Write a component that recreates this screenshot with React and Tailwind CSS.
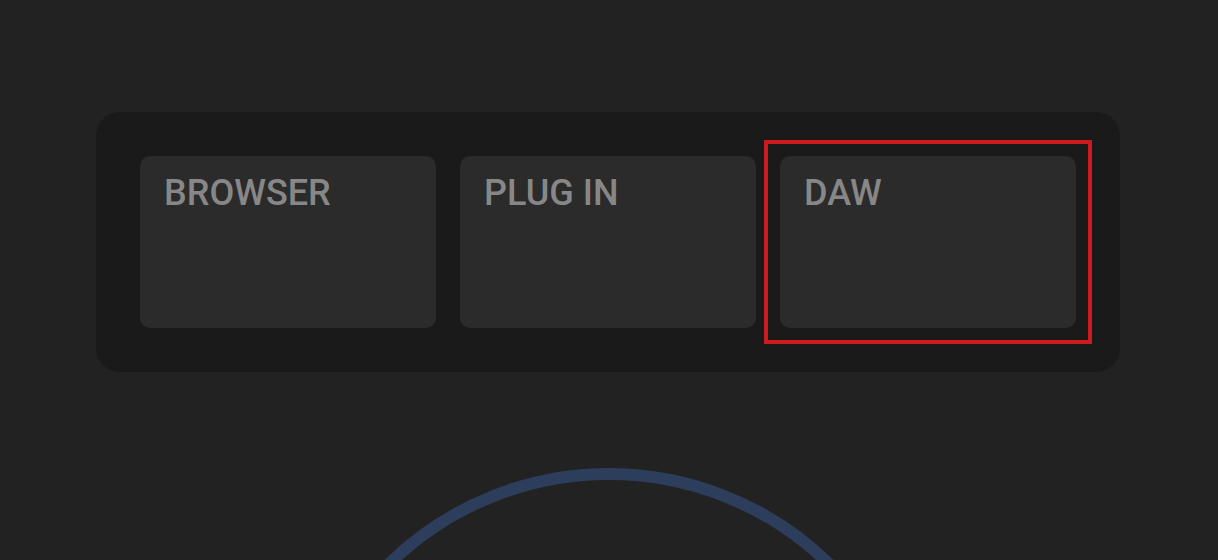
export default function App() {
  const cards = ["BROWSER", "PLUG IN", "DAW"];
  return (
    <div
      className="w-[1218px] h-[560px] overflow-hidden bg-[#222222] flex flex-col pt-[112px]"
      style={{ fontFamily: "Roboto, 'Noto Sans', sans-serif" }}
    >
      <div className="ml-[96px] w-[1024px] h-[260px] rounded-[24px] bg-[#1a1a1a] p-[44px] flex gap-[24px] shrink-0">
        {cards.map((c, i) => (
          <div key={c} className="relative w-[296px] h-[172px]">
            {i === 2 && (
              <div className="absolute -inset-[16px] border-[4px] border-[#cc1a1d] pointer-events-none" />
            )}
            <div className="w-full h-full rounded-[10px] bg-[#2b2b2b] pl-[24px] pt-[16px]">
              <div className="text-[36px] leading-[42px] font-medium text-[#878787]">{c}</div>
            </div>
          </div>
        ))}
      </div>
      <div className="flex justify-center mt-[96px] shrink-0">
        <div className="w-[640px] h-[640px] rounded-full border-[12px] border-[#2c3e5c] shrink-0" />
      </div>
    </div>
  );
}
